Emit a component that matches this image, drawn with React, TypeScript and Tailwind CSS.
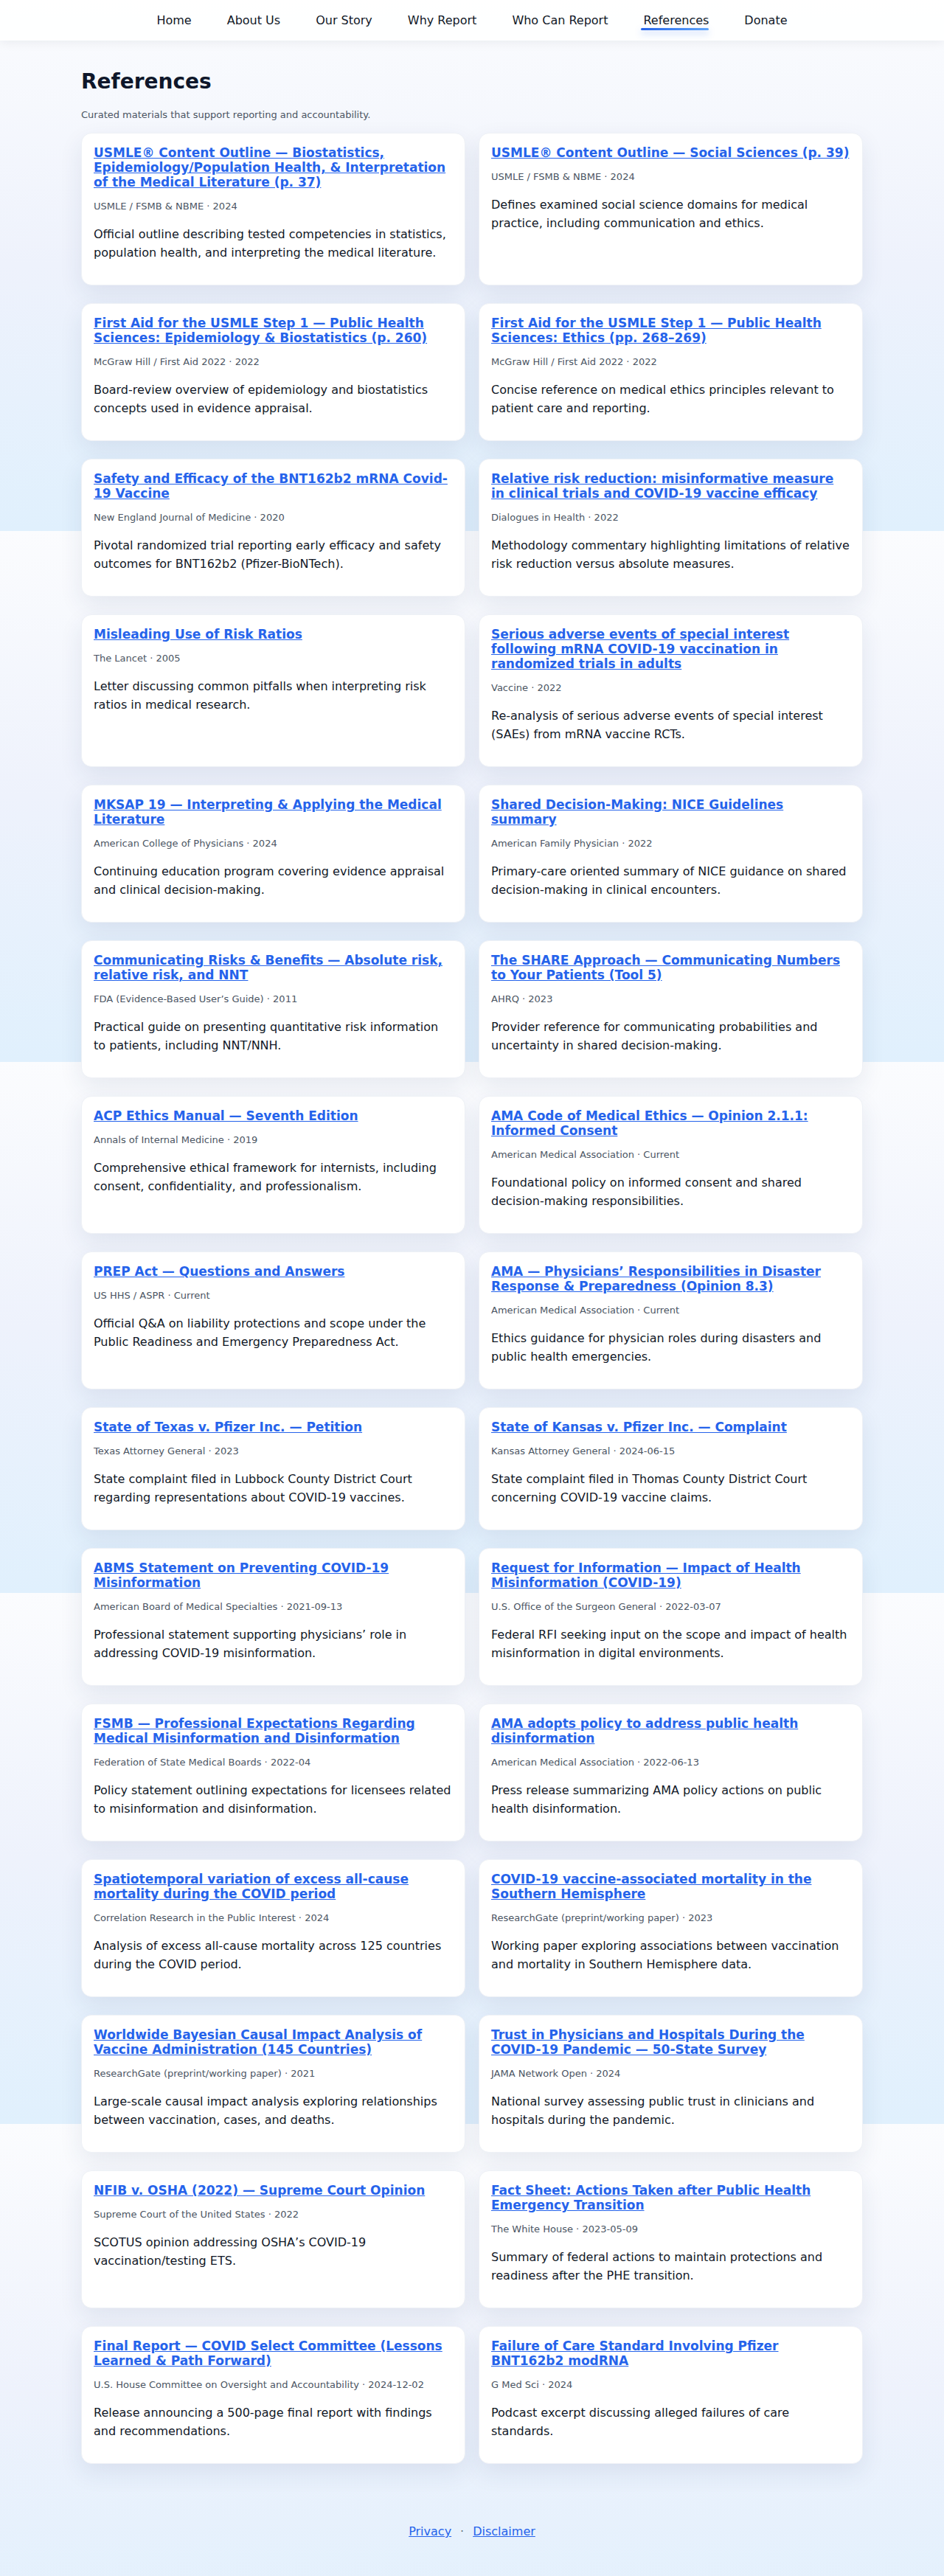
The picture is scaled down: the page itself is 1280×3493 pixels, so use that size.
import React from "react";

type Ref = { title: string; meta: string; desc: string };

const refs: Ref[] = [
  {
    title:
      "USMLE® Content Outline — Biostatistics, Epidemiology/Population Health, & Interpretation of the Medical Literature (p. 37)",
    meta: "USMLE / FSMB & NBME · 2024",
    desc: "Official outline describing tested competencies in statistics, population health, and interpreting the medical literature.",
  },
  {
    title: "USMLE® Content Outline — Social Sciences (p. 39)",
    meta: "USMLE / FSMB & NBME · 2024",
    desc: "Defines examined social science domains for medical practice, including communication and ethics.",
  },
  {
    title:
      "First Aid for the USMLE Step 1 — Public Health Sciences: Epidemiology & Biostatistics (p. 260)",
    meta: "McGraw Hill / First Aid 2022 · 2022",
    desc: "Board-review overview of epidemiology and biostatistics concepts used in evidence appraisal.",
  },
  {
    title: "First Aid for the USMLE Step 1 — Public Health Sciences: Ethics (pp. 268–269)",
    meta: "McGraw Hill / First Aid 2022 · 2022",
    desc: "Concise reference on medical ethics principles relevant to patient care and reporting.",
  },
  {
    title: "Safety and Efficacy of the BNT162b2 mRNA Covid-19 Vaccine",
    meta: "New England Journal of Medicine · 2020",
    desc: "Pivotal randomized trial reporting early efficacy and safety outcomes for BNT162b2 (Pfizer-BioNTech).",
  },
  {
    title:
      "Relative risk reduction: misinformative measure in clinical trials and COVID-19 vaccine efficacy",
    meta: "Dialogues in Health · 2022",
    desc: "Methodology commentary highlighting limitations of relative risk reduction versus absolute measures.",
  },
  {
    title: "Misleading Use of Risk Ratios",
    meta: "The Lancet · 2005",
    desc: "Letter discussing common pitfalls when interpreting risk ratios in medical research.",
  },
  {
    title:
      "Serious adverse events of special interest following mRNA COVID-19 vaccination in randomized trials in adults",
    meta: "Vaccine · 2022",
    desc: "Re-analysis of serious adverse events of special interest (SAEs) from mRNA vaccine RCTs.",
  },
  {
    title: "MKSAP 19 — Interpreting & Applying the Medical Literature",
    meta: "American College of Physicians · 2024",
    desc: "Continuing education program covering evidence appraisal and clinical decision-making.",
  },
  {
    title: "Shared Decision-Making: NICE Guidelines summary",
    meta: "American Family Physician · 2022",
    desc: "Primary-care oriented summary of NICE guidance on shared decision-making in clinical encounters.",
  },
  {
    title: "Communicating Risks & Benefits — Absolute risk, relative risk, and NNT",
    meta: "FDA (Evidence-Based User’s Guide) · 2011",
    desc: "Practical guide on presenting quantitative risk information to patients, including NNT/NNH.",
  },
  {
    title: "The SHARE Approach — Communicating Numbers to Your Patients (Tool 5)",
    meta: "AHRQ · 2023",
    desc: "Provider reference for communicating probabilities and uncertainty in shared decision-making.",
  },
  {
    title: "ACP Ethics Manual — Seventh Edition",
    meta: "Annals of Internal Medicine · 2019",
    desc: "Comprehensive ethical framework for internists, including consent, confidentiality, and professionalism.",
  },
  {
    title: "AMA Code of Medical Ethics — Opinion 2.1.1: Informed Consent",
    meta: "American Medical Association · Current",
    desc: "Foundational policy on informed consent and shared decision-making responsibilities.",
  },
  {
    title: "PREP Act — Questions and Answers",
    meta: "US HHS / ASPR · Current",
    desc: "Official Q&A on liability protections and scope under the Public Readiness and Emergency Preparedness Act.",
  },
  {
    title: "AMA — Physicians’ Responsibilities in Disaster Response & Preparedness (Opinion 8.3)",
    meta: "American Medical Association · Current",
    desc: "Ethics guidance for physician roles during disasters and public health emergencies.",
  },
  {
    title: "State of Texas v. Pfizer Inc. — Petition",
    meta: "Texas Attorney General · 2023",
    desc: "State complaint filed in Lubbock County District Court regarding representations about COVID-19 vaccines.",
  },
  {
    title: "State of Kansas v. Pfizer Inc. — Complaint",
    meta: "Kansas Attorney General · 2024-06-15",
    desc: "State complaint filed in Thomas County District Court concerning COVID-19 vaccine claims.",
  },
  {
    title: "ABMS Statement on Preventing COVID-19 Misinformation",
    meta: "American Board of Medical Specialties · 2021-09-13",
    desc: "Professional statement supporting physicians’ role in addressing COVID-19 misinformation.",
  },
  {
    title: "Request for Information — Impact of Health Misinformation (COVID-19)",
    meta: "U.S. Office of the Surgeon General · 2022-03-07",
    desc: "Federal RFI seeking input on the scope and impact of health misinformation in digital environments.",
  },
  {
    title: "FSMB — Professional Expectations Regarding Medical Misinformation and Disinformation",
    meta: "Federation of State Medical Boards · 2022-04",
    desc: "Policy statement outlining expectations for licensees related to misinformation and disinformation.",
  },
  {
    title: "AMA adopts policy to address public health disinformation",
    meta: "American Medical Association · 2022-06-13",
    desc: "Press release summarizing AMA policy actions on public health disinformation.",
  },
  {
    title: "Spatiotemporal variation of excess all-cause mortality during the COVID period",
    meta: "Correlation Research in the Public Interest · 2024",
    desc: "Analysis of excess all-cause mortality across 125 countries during the COVID period.",
  },
  {
    title: "COVID-19 vaccine-associated mortality in the Southern Hemisphere",
    meta: "ResearchGate (preprint/working paper) · 2023",
    desc: "Working paper exploring associations between vaccination and mortality in Southern Hemisphere data.",
  },
  {
    title: "Worldwide Bayesian Causal Impact Analysis of Vaccine Administration (145 Countries)",
    meta: "ResearchGate (preprint/working paper) · 2021",
    desc: "Large-scale causal impact analysis exploring relationships between vaccination, cases, and deaths.",
  },
  {
    title: "Trust in Physicians and Hospitals During the COVID-19 Pandemic — 50-State Survey",
    meta: "JAMA Network Open · 2024",
    desc: "National survey assessing public trust in clinicians and hospitals during the pandemic.",
  },
  {
    title: "NFIB v. OSHA (2022) — Supreme Court Opinion",
    meta: "Supreme Court of the United States · 2022",
    desc: "SCOTUS opinion addressing OSHA’s COVID-19 vaccination/testing ETS.",
  },
  {
    title: "Fact Sheet: Actions Taken after Public Health Emergency Transition",
    meta: "The White House · 2023-05-09",
    desc: "Summary of federal actions to maintain protections and readiness after the PHE transition.",
  },
  {
    title: "Final Report — COVID Select Committee (Lessons Learned & Path Forward)",
    meta: "U.S. House Committee on Oversight and Accountability · 2024-12-02",
    desc: "Release announcing a 500-page final report with findings and recommendations.",
  },
  {
    title: "Failure of Care Standard Involving Pfizer BNT162b2 modRNA",
    meta: "G Med Sci · 2024",
    desc: "Podcast excerpt discussing alleged failures of care standards.",
  },
];

const nav = ["Home", "About Us", "Our Story", "Why Report", "Who Can Report", "References", "Donate"];

export default function App() {
  return (
    <div className="min-h-screen font-['DejaVu_Sans',sans-serif] bg-[linear-gradient(180deg,#fbfcfe_0%,#eef2fc_50%,#e0f0fd_100%)] bg-[length:100%_720px] bg-repeat">
      <header className="h-[55px] bg-white/90 shadow-[0_2px_14px_rgba(15,23,42,0.07)] flex items-center justify-center">
        <nav className="flex items-center gap-12">
          {nav.map((n) => (
            <a
              key={n}
              href="#"
              className="relative text-base leading-6 text-[#111827] no-underline"
            >
              {n}
              {n === "References" && (
                <span className="absolute left-[-3px] right-0 bottom-[-1.5px] h-[3px] rounded-full bg-gradient-to-r from-[#2563eb] to-[#60a5fa] shadow-[0_4px_10px_rgba(37,99,235,0.35)]" />
              )}
            </a>
          ))}
        </nav>
      </header>

      <main className="w-[1060px] mx-auto pt-[39px] pb-8">
        <h1 className="text-[28px] leading-[34px] font-bold text-[#0f172a]">References</h1>
        <p className="mt-[18px] text-[13px] leading-[19.5px] text-[#4b5563]">
          Curated materials that support reporting and accountability.
        </p>
        <div className="mt-[14.5px] grid grid-cols-2 gap-x-[18px] gap-y-6">
          {refs.map((r) => (
            <article
              key={r.title}
              className="bg-white rounded-[14px] border border-[#eef1f6] shadow-[0_12px_32px_rgba(30,50,100,0.09)] px-4 pt-4 pb-[31px]"
            >
              <a
                href="#"
                className="block text-[17px] leading-5 font-bold text-[#2563eb] underline"
              >
                {r.title}
              </a>
              <div className="mt-[13px] text-[13px] leading-5 text-[#4b5563]">{r.meta}</div>
              <p className="mt-[15px] text-base leading-[25px] text-[#111827]">{r.desc}</p>
            </article>
          ))}
        </div>
      </main>

      <footer className="pt-12 pb-12 flex items-center justify-center gap-3 text-base leading-6">
        <a href="#" className="text-[#2563eb] underline">
          Privacy
        </a>
        <span className="text-[#6b7280]">·</span>
        <a href="#" className="text-[#2563eb] underline">
          Disclaimer
        </a>
      </footer>
    </div>
  );
}
